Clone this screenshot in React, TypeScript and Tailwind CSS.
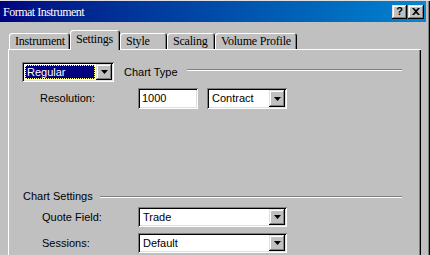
import React from "react";

const raised =
  "shadow-[inset_-1px_-1px_0_#000,inset_1px_1px_0_#dfdfdf,inset_-2px_-2px_0_#808080,inset_2px_2px_0_#fff]";
const sunken =
  "shadow-[inset_1px_1px_0_#808080,inset_-1px_-1px_0_#fff,inset_2px_2px_0_#000,inset_-2px_-2px_0_#dfdfdf]";

function Arrow() {
  return (
    <div className={`w-[16px] h-full bg-[#c0c0c0] flex items-center justify-center shrink-0 ${raised}`}>
      <svg width="7" height="4" viewBox="0 0 7 4">
        <path d="M0 0H7L3.5 4Z" fill="#000" />
      </svg>
    </div>
  );
}

function Combo({ value, width, selected }: { value: string; width: string; selected?: boolean }) {
  return (
    <div className={`${width} h-full bg-white flex p-[2px] ${sunken}`}>
      <div className="flex-1 flex p-[1px] min-w-0">
        {selected ? (
          <div className="flex-1 bg-[#000080] border border-dotted border-[#ffff7f] text-white flex items-center pl-[1px]">
            {value}
          </div>
        ) : (
          <div className="flex-1 flex items-center pl-[2px] text-black">{value}</div>
        )}
      </div>
      <Arrow />
    </div>
  );
}

function Tab({ label, width, selected }: { label: string; width: string; selected?: boolean }) {
  return (
    <div
      className={`${width} ${
        selected ? "h-[20px] -mb-[1px] z-10 pb-[3px]" : "h-[16px]"
      } relative bg-[#c0c0c0] rounded-t-[3px] flex items-center pl-[6px] shadow-[inset_1px_1px_0_#fff,inset_-1px_0_0_#000,inset_-2px_0_0_#808080]`}
    >
      {label}
    </div>
  );
}

export default function App() {
  return (
    <div className="w-[430px] h-[255px] overflow-hidden bg-[#c0c0c0] flex flex-col border-t border-[#dfdfdf] shadow-[inset_-1px_0_0_#000,inset_-2px_0_0_#808080]">
      <div className="h-[21px] mr-[4px] bg-linear-to-r from-[#000080] to-[#1084d0] flex items-center justify-between pl-[3px] pr-[2px] shrink-0">
        <span className="font-['Liberation_Serif',serif] text-[12px] text-white tracking-[-0.5px]">
          Format Instrument
        </span>
        <div className="flex gap-[0px]">
          <div className={`w-[15px] h-[14px] bg-[#c0c0c0] flex items-center justify-center font-['Liberation_Sans',sans-serif] font-bold text-[11px] leading-none text-black ${raised}`}>
            ?
          </div>
          <div className={`w-[16px] h-[14px] ml-[1px] bg-[#c0c0c0] flex items-center justify-center ${raised}`}>
            <svg width="8" height="7" viewBox="0 0 8 7">
              <path d="M0 0h2l2 2 2-2h2L5 3.5 8 7H6L4 5 2 7H0l3-3.5Z" fill="#000" />
            </svg>
          </div>
        </div>
      </div>

      <div className="flex items-end pl-[9px] mt-[8px] h-[19px] font-['Liberation_Serif',serif] text-[12px] text-black tracking-[-0.2px] shrink-0">
        <Tab label="Instrument" width="w-[61px]" />
        <Tab label="Settings" width="w-[50px]" selected />
        <Tab label="Style" width="w-[47px]" />
        <Tab label="Scaling" width="w-[48px]" />
        <Tab label="Volume Profile" width="w-[82px]" />
      </div>

      <div className="ml-[8px] w-[413px] flex-1 border-t border-white shadow-[inset_1px_0_0_#fff,inset_-1px_0_0_#000,inset_-2px_0_0_#808080] pl-[14px] pr-[19px] pt-[12px] flex flex-col font-['Liberation_Sans',sans-serif] text-[11px] text-black">
        <div className="flex items-center h-[20px]">
          <Combo value="Regular" width="w-[92px]" selected />
          <span className="ml-[10px]">Chart Type</span>
          <div className="flex-1 ml-[9px] self-start mt-[7px] h-[2px] bg-[#808080] border-b border-white" />
        </div>

        <div className="flex items-center h-[21px] mt-[6px]">
          <span className="ml-[18px] w-[98px]">Resolution:</span>
          <div className={`w-[60px] h-full bg-white flex items-center pl-[4px] ${sunken}`}>1000</div>
          <div className="ml-[9px] h-full flex">
            <Combo value="Contract" width="w-[80px]" />
          </div>
        </div>

        <div className="flex items-center h-[13px] mt-[81px]">
          <span className="ml-[1px]">Chart Settings</span>
          <div className="flex-1 ml-[7px] h-[2px] bg-[#808080] border-b border-white" />
        </div>

        <div className="flex items-center h-[20px] mt-[4px]">
          <span className="ml-[20px] w-[96px]">Quote Field:</span>
          <Combo value="Trade" width="w-[149px]" />
        </div>

        <div className="flex items-center h-[20px] mt-[6px]">
          <span className="ml-[20px] w-[96px]">Sessions:</span>
          <Combo value="Default" width="w-[149px]" />
        </div>
      </div>
    </div>
  );
}
